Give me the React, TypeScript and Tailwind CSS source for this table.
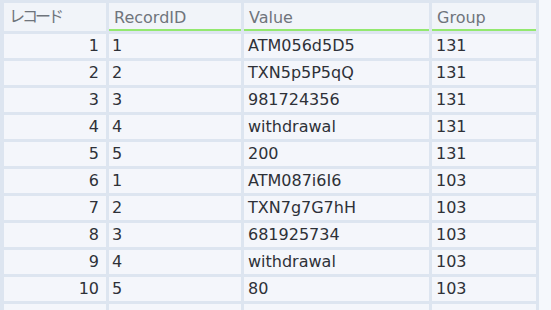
const rows = [
  { rec: 1, id: "1", value: "ATM056d5D5", group: "131" },
  { rec: 2, id: "2", value: "TXN5p5P5qQ", group: "131" },
  { rec: 3, id: "3", value: "981724356", group: "131" },
  { rec: 4, id: "4", value: "withdrawal", group: "131" },
  { rec: 5, id: "5", value: "200", group: "131" },
  { rec: 6, id: "1", value: "ATM087i6I6", group: "103" },
  { rec: 7, id: "2", value: "TXN7g7G7hH", group: "103" },
  { rec: 8, id: "3", value: "681925734", group: "103" },
  { rec: 9, id: "4", value: "withdrawal", group: "103" },
  { rec: 10, id: "5", value: "80", group: "103" },
];

const font = { fontFamily: '"DejaVu Sans", Verdana, "Noto Sans CJK JP", sans-serif' };

export default function App() {
  return (
    <div className="w-[551px] h-[310px] overflow-hidden bg-[#f5f8fc]" style={font}>
      <div className="w-[539px] grid grid-cols-[102px_132px_185px_104px] gap-[3px] pl-[4px] pr-[3px] pt-[3px] bg-[#dde5f0] text-[16px]">
        {/* header */}
        <div className="h-[28px] pl-[5px] pt-[3px] leading-[22px] bg-[#f1f4f9] text-[#6f747c] tracking-[-3px]">
          レコード
        </div>
        <div className="h-[28px] pl-[5px] pt-[4px] leading-[22px] bg-[#f1f4f9] text-[#6f747c] border-b-2 border-[#93e86f]">
          RecordID
        </div>
        <div className="h-[28px] pl-[5px] pt-[4px] leading-[22px] bg-[#f1f4f9] text-[#6f747c] border-b-2 border-[#93e86f]">
          Value
        </div>
        <div className="h-[28px] pl-[5px] pt-[4px] leading-[22px] bg-[#f1f4f9] text-[#6f747c] border-b-2 border-[#93e86f]">
          Group
        </div>

        {/* rows */}
        {rows.map((r) => (
          <div key={r.rec} className="contents text-[#2e3138]">
            <div className="h-[24px] leading-[24px] pr-[7px] text-right bg-[#f4f6fb]">{r.rec}</div>
            <div className="h-[24px] leading-[24px] pl-[3px] bg-[#f4f6fb]">{r.id}</div>
            <div className="h-[24px] leading-[24px] pl-[4px] bg-[#f4f6fb]">{r.value}</div>
            <div className="h-[24px] leading-[24px] pl-[4px] bg-[#f4f6fb]">{r.group}</div>
          </div>
        ))}
        <div className="h-[24px] bg-[#f4f6fb]" />
        <div className="h-[24px] bg-[#f4f6fb]" />
        <div className="h-[24px] bg-[#f4f6fb]" />
        <div className="h-[24px] bg-[#f4f6fb]" />
      </div>
    </div>
  );
}
